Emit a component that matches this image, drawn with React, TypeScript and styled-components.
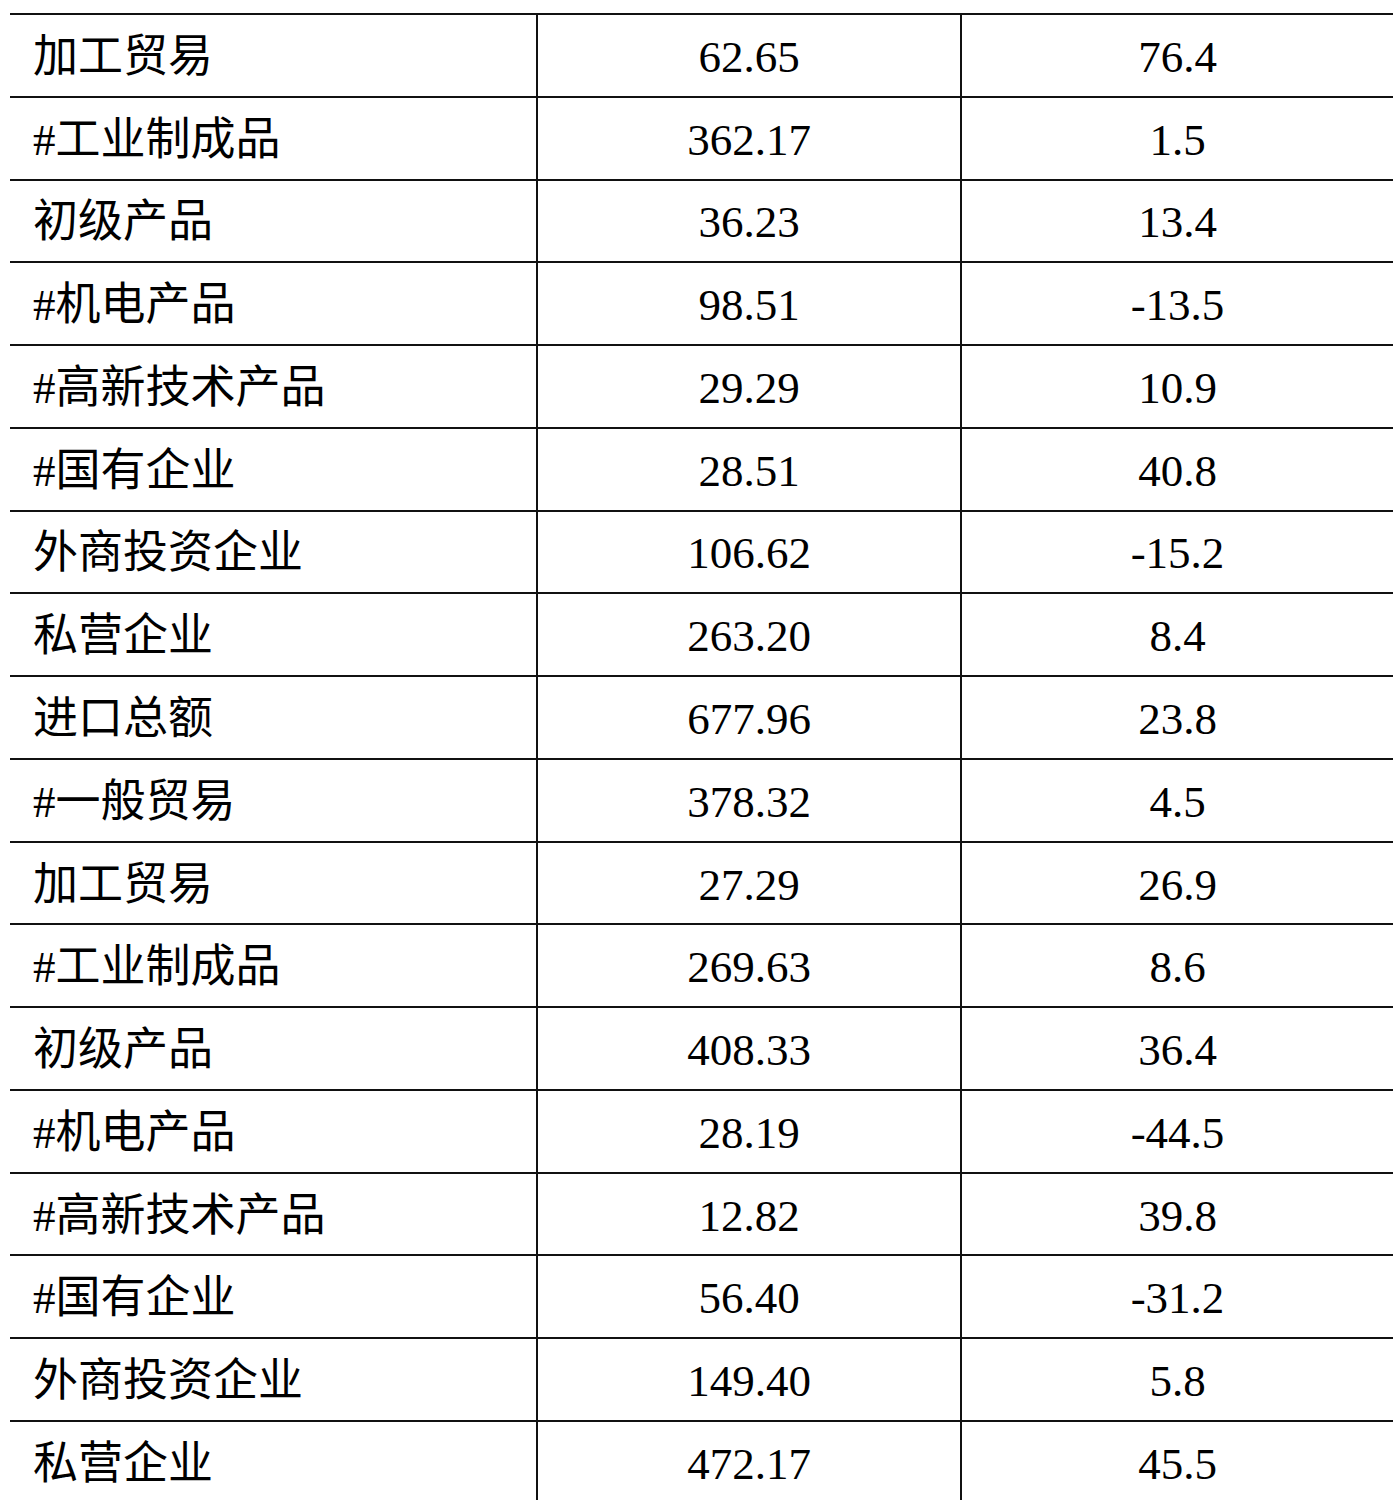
import styled, { createGlobalStyle } from 'styled-components';

const GlobalStyle = createGlobalStyle`
  html, body {
    margin: 0;
    padding: 0;
    background: #fff;
  }
  body {
    font-family: 'Liberation Serif', 'Times New Roman', 'Noto Sans CJK SC', serif;
    color: #000;
  }
`;

const rows: [string, string, string][] = [
  ['加工贸易', '62.65', '76.4'],
  ['#工业制成品', '362.17', '1.5'],
  ['初级产品', '36.23', '13.4'],
  ['#机电产品', '98.51', '-13.5'],
  ['#高新技术产品', '29.29', '10.9'],
  ['#国有企业', '28.51', '40.8'],
  ['外商投资企业', '106.62', '-15.2'],
  ['私营企业', '263.20', '8.4'],
  ['进口总额', '677.96', '23.8'],
  ['#一般贸易', '378.32', '4.5'],
  ['加工贸易', '27.29', '26.9'],
  ['#工业制成品', '269.63', '8.6'],
  ['初级产品', '408.33', '36.4'],
  ['#机电产品', '28.19', '-44.5'],
  ['#高新技术产品', '12.82', '39.8'],
  ['#国有企业', '56.40', '-31.2'],
  ['外商投资企业', '149.40', '5.8'],
  ['私营企业', '472.17', '45.5'],
];

function App() {
  return (
    <>
      <GlobalStyle />
      <Page>
        <Table>
          <colgroup>
            <col style={{ width: 527 }} />
            <col style={{ width: 424 }} />
            <col style={{ width: 432 }} />
          </colgroup>
          <tbody>
            {rows.map(([name, amount, growth], i) => (
              <Row key={i}>
                <NameCell>{name}</NameCell>
                <NumCell>{amount}</NumCell>
                <NumCell $last>{growth}</NumCell>
              </Row>
            ))}
          </tbody>
        </Table>
      </Page>
    </>
  );
}

export default App;

const Page = styled.div`
  padding: 13px 0 0 10px;
  height: 1500px;
  overflow: hidden;
  box-sizing: border-box;
`;

const Table = styled.table`
  border-collapse: collapse;
  table-layout: fixed;
  width: 1383px;
  font-size: 45px;
`;

const Row = styled.tr`
  height: 82.78px;
`;

const Cell = styled.td`
  border-top: 2px solid #111;
  border-bottom: 2px solid #111;
  padding: 4px 0 0;
  line-height: 1;
  vertical-align: middle;
  white-space: nowrap;
`;

const NameCell = styled(Cell)`
  text-align: left;
  padding-left: 23px;
  border-right: 2px solid #111;
`;

const NumCell = styled(Cell)<{ $last?: boolean }>`
  text-align: center;
  border-right: ${(p) => (p.$last ? 'none' : '2px solid #111')};
`;
